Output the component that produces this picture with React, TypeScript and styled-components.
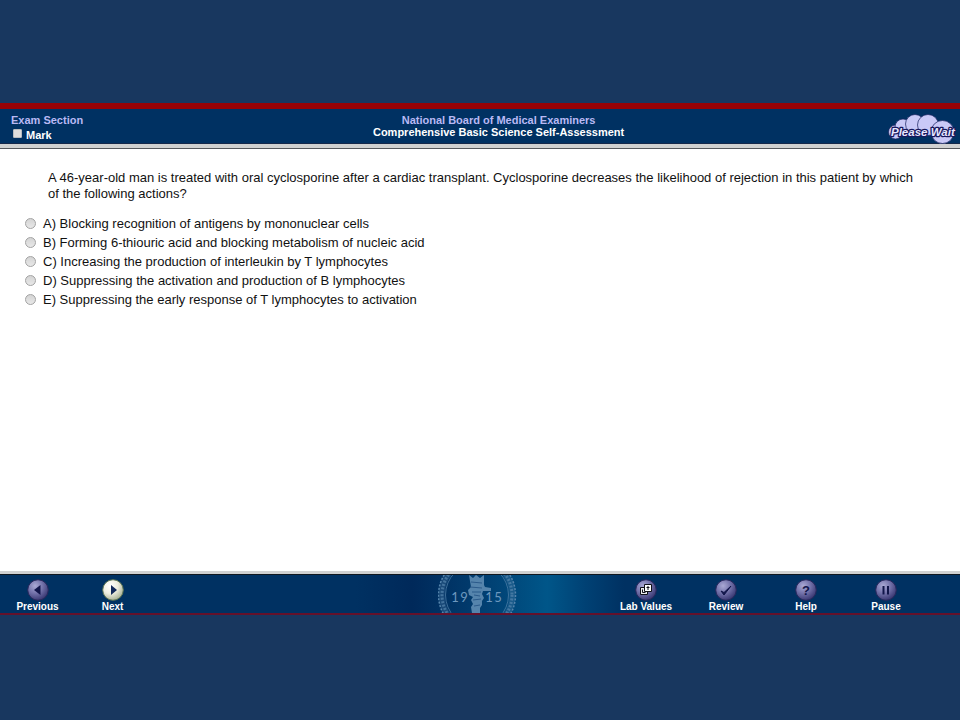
import React, { useState } from "react";
import styled, { createGlobalStyle } from "styled-components";

const GlobalStyle = createGlobalStyle`
  * { box-sizing: border-box; }
  body {
    margin: 0;
    background: #18375f;
    font-family: "Liberation Sans", Arial, sans-serif;
  }
`;

const Page = styled.div`
  display: flex;
  flex-direction: column;
  min-height: 100vh;
  padding: 103px 0 105px;
`;

const Header = styled.header`
  display: grid;
  grid-template-columns: 12fr auto 11fr;
  align-items: start;
  height: 41px;
  padding: 5px 4px 0 11px;
  border-top: 6px solid #980205;
  border-bottom: 1px solid #14284a;
  background: #003162;
  font-size: 11px;
  font-weight: bold;
  line-height: 12px;
`;

const SectionLabel = styled.div`
  color: #b9b9f4;
`;

const MarkLabel = styled.label`
  display: flex;
  align-items: center;
  gap: 4px;
  width: max-content;
  margin: 3px 0 0 2px;
  color: #fff;
`;

const MarkBox = styled.input`
  appearance: none;
  width: 9px;
  height: 9px;
  margin: 0 0 3px;
  border: 1px solid #b9bcc0;
  border-radius: 1px;
  background: #dedede;

  &:checked {
    background: #4a5fa8;
  }
`;

const Titles = styled.div`
  text-align: center;
`;

const Organization = styled.div`
  color: #b9b9f4;
`;

const ExamTitle = styled.h1`
  margin: 0;
  color: #fff;
  font-size: 11px;
  line-height: 12px;
`;

const WaitLogo = styled.svg`
  justify-self: end;
  width: 68px;
  height: 30px;
`;

const Divider = styled.div<{ $bottom?: boolean }>`
  height: ${(p) => (p.$bottom ? 4 : 5)}px;
  border-bottom: ${(p) => (p.$bottom ? "1px solid #101820" : "1px solid #55585c")};
  background: #d0d1d1;
`;

const Main = styled.main`
  flex: 1;
  padding: 21px 16px 20px 25px;
  background: #fff;
  color: #111;
  font-size: 13px;
`;

const Question = styled.p`
  margin: 0 0 12px 23px;
  line-height: 16px;
`;

const Options = styled.fieldset`
  margin: 0;
  padding: 0;
  border: 0;
`;

const Option = styled.label`
  display: flex;
  align-items: center;
  gap: 7px;
  width: max-content;
  max-width: 100%;
  line-height: 19px;
`;

const Radio = styled.input`
  appearance: none;
  flex: none;
  width: 11px;
  height: 11px;
  margin: 0;
  border: 1px solid #a2a2a2;
  border-radius: 50%;
  background: linear-gradient(#d4d4d4, #e8e8e8);

  &:checked {
    background: radial-gradient(circle, #333 30%, #e4e4e4 40%);
  }
`;

const Footer = styled.footer`
  display: grid;
  grid-template-columns: 1fr auto 1fr;
  height: 40px;
  border-bottom: 2px solid #64112b;
  background: linear-gradient(
    90deg,
    #003162 0 37%,
    #00295a 43%,
    #013a6c 49%,
    #005689 57%,
    #004174 61%,
    #003162 65%
  );
`;

const Nav = styled.nav<{ $end?: boolean }>`
  display: flex;
  justify-content: ${(p) => (p.$end ? "flex-end" : "flex-start")};
  padding-right: ${(p) => (p.$end ? 34 : 0)}px;
`;

const NavButton = styled.button<{ $width: number }>`
  display: flex;
  flex-direction: column;
  align-items: center;
  width: ${(p) => p.$width}px;
  padding: 4px 0 0;
  border: 0;
  background: none;
  color: #fff;
  font: bold 10px/12px "Liberation Sans", Arial, sans-serif;
  cursor: pointer;
`;

const Orb = styled.svg`
  width: 22px;
  height: 22px;
`;

const Seal = styled.svg`
  width: 84px;
  height: 38px;
`;

type IconName = "previous" | "next" | "lab" | "review" | "help" | "pause";

const ink = "#11154a";

const glyphs: Record<IconName, React.ReactNode> = {
  previous: <path d="M13.5 6v10L7 11z" fill={ink} />,
  next: <path d="M9 6v10l6-5z" fill="#11285a" />,
  lab: (
    <g stroke="#101018">
      <path d="M5.5 8.5h7v7h-7z" fill="#eee" />
      <path d="M9.5 5.5h7v7h-7z" fill="#fff" />
      <path d="M13 7v4M11.500 8.500h3M7.500 10.500v3h3" fill="none" />
    </g>
  ),
  review: <path d="M6 12l3 4 7-9-7 6.500z" fill={ink} stroke={ink} strokeLinejoin="round" />,
  help: (
    <text x="11" y="16" textAnchor="middle" fontSize="13" fontWeight="bold" fill={ink}>
      ?
    </text>
  ),
  pause: <path d="M7.500 7h2v8.500h-2zM12 7h2v8.500h-2z" fill={ink} />,
};

function OrbIcon({ name }: { name: IconName }) {
  const light = name === "next";
  return (
    <Orb viewBox="0 0 22 22" aria-hidden="true">
      <defs>
        <radialGradient id={`orb-${name}`} cx="0.36" cy="0.3" r="0.75">
          <stop offset="0" stopColor={light ? "#ffffff" : "#aaa9d5"} />
          <stop offset="0.5" stopColor={light ? "#eeeee0" : "#7170a8"} />
          <stop offset="1" stopColor={light ? "#a4ad92" : "#34336e"} />
        </radialGradient>
      </defs>
      <circle
        cx="11"
        cy="11"
        r="10.300"
        fill={`url(#orb-${name})`}
        stroke={light ? "#5f7654" : "#29285d"}
      />
      {glyphs[name]}
    </Orb>
  );
}

function NavItem({ name, label, width }: { name: IconName; label: string; width: number }) {
  return (
    <NavButton type="button" $width={width}>
      <OrbIcon name={name} />
      {label}
    </NavButton>
  );
}

function PleaseWait() {
  return (
    <WaitLogo viewBox="0 0 68 30" role="img" aria-label="Please Wait">
      <g fill="#c9c9f7" stroke="#17215d" strokeWidth="0.700">
        <circle cx="7.500" cy="18" r="7" />
        <circle cx="15" cy="13" r="8" />
        <circle cx="27" cy="10" r="9.500" />
        <circle cx="40" cy="11" r="10.500" />
        <circle cx="54.500" cy="18" r="11.500" />
      </g>
      <text
        x="3"
        y="22"
        fontSize="11.500"
        fontWeight="bold"
        fontStyle="italic"
        fill="#e6e6ff"
        stroke="#17175c"
        strokeWidth="2.500"
        strokeLinejoin="round"
        paintOrder="stroke"
      >
        Please Wait
      </text>
    </WaitLogo>
  );
}

function SealArt() {
  return (
    <Seal viewBox="0 0 84 38" aria-hidden="true">
      <g fill="none" stroke="#5584ac">
        <circle cx="39" cy="20" r="35.500" strokeWidth="6" opacity="0.300" />
        <circle cx="39" cy="20" r="38.500" strokeWidth="1.500" strokeDasharray="2 1.500" />
        <circle cx="39" cy="20" r="35" strokeWidth="3" strokeDasharray="2 1.500" opacity="0.700" />
        <circle cx="39" cy="20" r="31.500" opacity="0.700" />
      </g>
      <path
        d="M31 0l4 3 3-3 4 3 4-3v10l1 2 6 1v3h-8l-1 3 2 4-2 3v4l-2 3v5h-8l-1-6 2-3-2-4 2-3-4-2-1-5 3-3z"
        fill="#5584ac"
      />
      <path
        d="M33 7l11 1M32 12l12 1M34 17h9M36 20l6 1M35 25l8-1M36 31l6-1"
        fill="none"
        stroke="#2b5a8a"
      />
      <g fill="#6d98bf" fontFamily="Lato, sans-serif" fontSize="13" textAnchor="middle">
        <text x="17" y="27">1</text>
        <text x="26" y="27">9</text>
        <text x="51" y="27">1</text>
        <text x="60" y="27">5</text>
      </g>
    </Seal>
  );
}

const answers = [
  "A) Blocking recognition of antigens by mononuclear cells",
  "B) Forming 6-thiouric acid and blocking metabolism of nucleic acid",
  "C) Increasing the production of interleukin by T lymphocytes",
  "D) Suppressing the activation and production of B lymphocytes",
  "E) Suppressing the early response of T lymphocytes to activation",
];

export default function App() {
  const [selected, setSelected] = useState<number | null>(null);

  return (
    <>
      <GlobalStyle />
      <Page>
        <Header>
          <div>
            <SectionLabel>Exam Section</SectionLabel>
            <MarkLabel>
              <MarkBox type="checkbox" />
              Mark
            </MarkLabel>
          </div>
          <Titles>
            <Organization>National Board of Medical Examiners</Organization>
            <ExamTitle>Comprehensive Basic Science Self-Assessment</ExamTitle>
          </Titles>
          <PleaseWait />
        </Header>
        <Divider />
        <Main>
          <Question id="question">
            A 46-year-old man is treated with oral cyclosporine after a cardiac transplant.
            Cyclosporine decreases the likelihood of rejection in this patient by which
            <br />
            of the following actions?
          </Question>
          <Options aria-labelledby="question">
            {answers.map((answer, i) => (
              <Option key={answer}>
                <Radio
                  type="radio"
                  name="answer"
                  checked={selected === i}
                  onChange={() => setSelected(i)}
                />
                {answer}
              </Option>
            ))}
          </Options>
        </Main>
        <Divider $bottom />
        <Footer>
          <Nav aria-label="Questions">
            <NavItem name="previous" label="Previous" width={75} />
            <NavItem name="next" label="Next" width={75} />
          </Nav>
          <SealArt />
          <Nav $end aria-label="Tools">
            <NavItem name="lab" label="Lab Values" width={80} />
            <NavItem name="review" label="Review" width={80} />
            <NavItem name="help" label="Help" width={80} />
            <NavItem name="pause" label="Pause" width={80} />
          </Nav>
        </Footer>
      </Page>
    </>
  );
}
